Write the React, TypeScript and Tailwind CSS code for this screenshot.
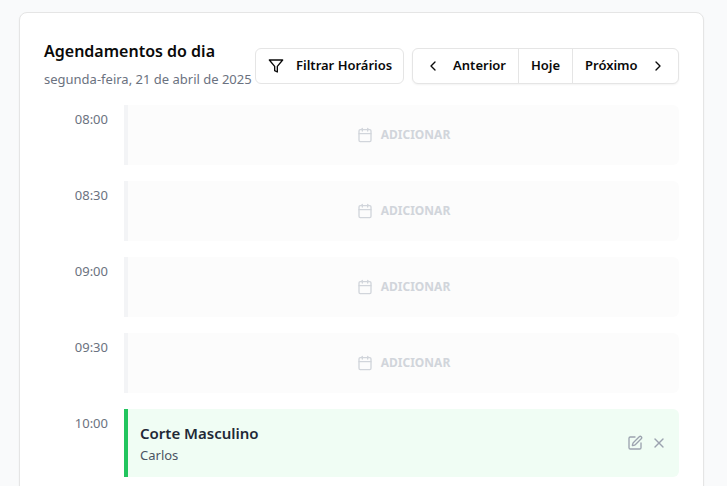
import { Calendar, ChevronLeft, ChevronRight, SquarePen, X } from "lucide-react";

const freeSlots = ["08:00", "08:30", "09:00", "09:30"];

function FilterIcon() {
  return (
    <svg
      className="size-4 shrink-0"
      viewBox="0 0 24 24"
      fill="none"
      stroke="currentColor"
      strokeWidth="2"
      strokeLinecap="round"
      strokeLinejoin="round"
      aria-hidden="true"
    >
      <polygon points="22 3 2 3 10 12.46 10 19 14 21 14 12.46 22 3" />
    </svg>
  );
}

function Time({ value }: { value: string }) {
  return <time className="w-16 shrink-0 pt-1 text-right text-[13px] leading-5 text-[#6b7280]">{value}</time>;
}

function FreeSlot({ time }: { time: string }) {
  return (
    <li className="flex gap-4">
      <Time value={time} />
      <button
        type="button"
        className="flex h-15 flex-1 items-center justify-center gap-2 rounded-r-md border-l-4 border-[#f3f4f6] bg-[#fcfcfc] text-xs font-bold text-[#d1d5db]"
      >
        <Calendar className="size-4" aria-hidden="true" />
        ADICIONAR
      </button>
    </li>
  );
}

export default function App() {
  return (
    <div className="min-h-screen bg-[#f9fafb] pt-3 pr-[23px] pl-[19px] font-['Noto_Sans','Segoe_UI',sans-serif]">
      <main className="rounded-lg border border-[#e5e5e5] bg-white p-6 shadow-xs">
        <header className="flex items-start justify-between">
          <div className="whitespace-nowrap">
            <h1 className="text-base leading-7 font-semibold text-neutral-950">Agendamentos do dia</h1>
            <p className="mt-1 text-[13px] leading-5 text-[#6b7280]">segunda-feira, 21 de abril de 2025</p>
          </div>
          <div className="flex shrink-0 gap-2 pt-[11px] text-[13px] font-semibold text-neutral-950">
            <button
              type="button"
              className="flex h-9 w-[149px] items-center gap-3 rounded-md border border-[#e5e5e5] bg-white px-3 whitespace-nowrap"
            >
              <FilterIcon />
              Filtrar Horários
            </button>
            <div className="flex h-9 w-[267px] divide-x divide-[#e5e5e5] rounded-md border border-[#e5e5e5] bg-white shadow-xs">
              <button type="button" className="flex flex-1 items-center justify-between px-3">
                <ChevronLeft className="size-4" aria-hidden="true" />
                Anterior
              </button>
              <button type="button" className="w-[54px]">
                Hoje
              </button>
              <button type="button" className="flex flex-1 items-center justify-between px-3">
                Próximo
                <ChevronRight className="size-4" aria-hidden="true" />
              </button>
            </div>
          </div>
        </header>

        <ul className="mt-4 flex flex-col gap-4">
          {freeSlots.map((time) => (
            <FreeSlot key={time} time={time} />
          ))}
          <li className="flex gap-4">
            <Time value="10:00" />
            <article className="flex flex-1 items-center justify-between rounded-r-md border-l-4 border-[#22c55e] bg-[#f0fdf4] p-3">
              <div>
                <h2 className="text-[15px] leading-6 font-semibold text-[#1f2937]">Corte Masculino</h2>
                <p className="text-[13px] leading-5 text-[#4b5563]">Carlos</p>
              </div>
              <div className="flex gap-2 text-[#9ca3af]">
                <button type="button" aria-label="Editar">
                  <SquarePen className="size-4" />
                </button>
                <button type="button" aria-label="Cancelar">
                  <X className="size-4" />
                </button>
              </div>
            </article>
          </li>
        </ul>
      </main>
    </div>
  );
}
